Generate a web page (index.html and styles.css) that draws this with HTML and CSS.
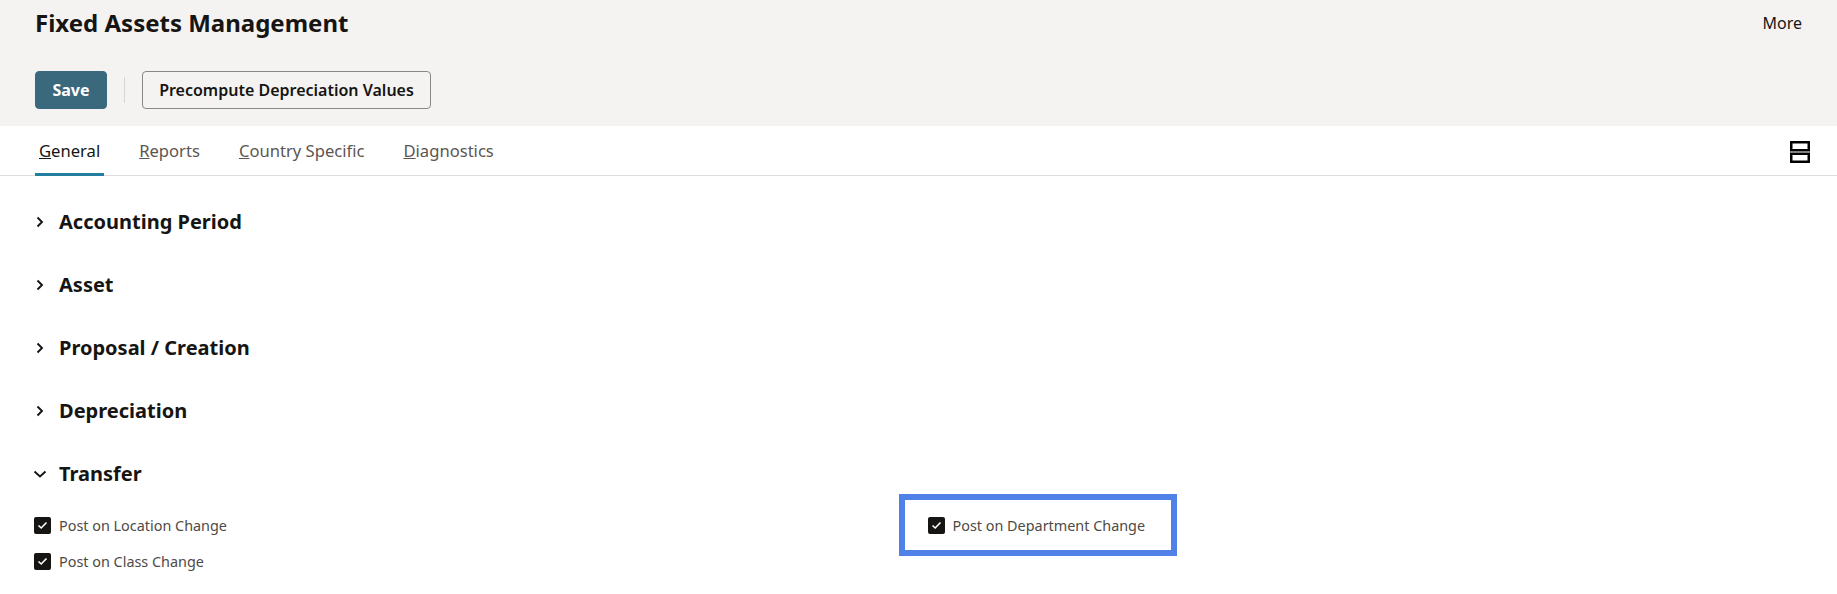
FILE: index.html
```html
<!DOCTYPE html>
<html>
<head>
<meta charset="utf-8">
<link rel="stylesheet" href="styles.css">
</head>
<body>
<header class="page-header">
  <div class="title-row">
    <h1 class="title">Fixed Assets Management</h1>
    <span class="more">More</span>
  </div>
  <div class="toolbar">
    <button class="btn btn-primary">Save</button>
    <span class="tb-sep"></span>
    <button class="btn btn-outline">Precompute Depreciation Values</button>
  </div>
</header>
<nav class="tabs">
  <div class="tab-list">
    <span class="tab active"><u>G</u>eneral</span>
    <span class="tab"><u>R</u>eports</span>
    <span class="tab"><u>C</u>ountry Specific</span>
    <span class="tab"><u>D</u>iagnostics</span>
  </div>
  <span class="layout-icon">
    <svg width="20" height="22" viewBox="0 0 20 22"><rect x="1.25" y="1.25" width="17.5" height="8" fill="none" stroke="#000" stroke-width="2.5"/><rect x="1.25" y="12.75" width="17.5" height="8" fill="none" stroke="#000" stroke-width="2.5"/></svg>
  </span>
</nav>
<main class="content">
  <section class="section">
    <div class="sec-head"><span class="chev"><svg width="10" height="12" viewBox="0 0 10 12"><path d="M2.5 1.5 L7 6 L2.5 10.5" fill="none" stroke="#161513" stroke-width="1.9"/></svg></span><h2>Accounting Period</h2></div>
  </section>
  <section class="section">
    <div class="sec-head"><span class="chev"><svg width="10" height="12" viewBox="0 0 10 12"><path d="M2.5 1.5 L7 6 L2.5 10.5" fill="none" stroke="#161513" stroke-width="1.9"/></svg></span><h2>Asset</h2></div>
  </section>
  <section class="section">
    <div class="sec-head"><span class="chev"><svg width="10" height="12" viewBox="0 0 10 12"><path d="M2.5 1.5 L7 6 L2.5 10.5" fill="none" stroke="#161513" stroke-width="1.9"/></svg></span><h2>Proposal / Creation</h2></div>
  </section>
  <section class="section">
    <div class="sec-head"><span class="chev"><svg width="10" height="12" viewBox="0 0 10 12"><path d="M2.5 1.5 L7 6 L2.5 10.5" fill="none" stroke="#161513" stroke-width="1.9"/></svg></span><h2>Depreciation</h2></div>
  </section>
  <section class="section open">
    <div class="sec-head"><span class="chev"><svg width="14" height="10" viewBox="0 0 14 10"><path d="M1.5 2.5 L7 7.5 L12.5 2.5" fill="none" stroke="#161513" stroke-width="1.9"/></svg></span><h2>Transfer</h2></div>
    <div class="fields">
      <div class="col">
        <label class="field"><span class="cb"><svg width="11" height="9" viewBox="0 0 11 9"><path d="M1.5 4.5 L4.2 7 L9.5 1.5" fill="none" stroke="#fff" stroke-width="1.6"/></svg></span>Post on Location Change</label>
        <label class="field"><span class="cb"><svg width="11" height="9" viewBox="0 0 11 9"><path d="M1.5 4.5 L4.2 7 L9.5 1.5" fill="none" stroke="#fff" stroke-width="1.6"/></svg></span>Post on Class Change</label>
      </div>
      <div class="col">
        <label class="field highlighted"><span class="cb"><svg width="11" height="9" viewBox="0 0 11 9"><path d="M1.5 4.5 L4.2 7 L9.5 1.5" fill="none" stroke="#fff" stroke-width="1.6"/></svg></span>Post on Department Change</label>
      </div>
    </div>
  </section>
</main>
</body>
</html>
```
FILE: styles.css
```css
* { box-sizing: border-box; }
html, body { margin: 0; padding: 0; }
body {
  font-family: "Noto Sans", sans-serif;
  color: #161513;
  background: #fff;
  width: 1837px;
  height: 594px;
  overflow: hidden;
}
.page-header {
  background: #f4f3f1;
  padding: 8px 35px 17px 35px;
}
.title-row {
  display: flex;
  justify-content: space-between;
  align-items: center;
  height: 30px;
}
.title {
  margin: 0;
  font-size: 24px;
  font-weight: 700;
  line-height: 30px;
}
.more {
  font-size: 16px;
  color: #161513;
}
.toolbar {
  display: flex;
  align-items: center;
  margin-top: 33px;
  height: 38px;
}
.btn {
  font-family: inherit;
  font-size: 16px;
  height: 38px;
  border-radius: 4px;
  padding: 0;
  cursor: pointer;
}
.btn-primary {
  background: #3a687c;
  color: #fff;
  border: 1px solid #3a687c;
  font-weight: 700;
  width: 72px;
}
.tb-sep {
  width: 1px;
  height: 26px;
  background: #d9d6d2;
  margin: 0 17px 0 17px;
}
.btn-outline {
  background: #f4f3f1;
  color: #161513;
  border: 1px solid #8b8783;
  font-weight: 600;
  width: 289px;
}
.tabs {
  display: flex;
  justify-content: space-between;
  align-items: center;
  height: 50px;
  padding: 0 27px 0 35px;
  border-bottom: 1px solid #e0dedb;
}
.tab-list {
  display: flex;
  height: 49px;
  gap: 31px;
  align-self: flex-start;
}
.tab {
  display: flex;
  align-items: center;
  padding: 1px 4px 0;
  font-size: 16.6px;
  color: #5b5651;
  border-bottom: 3px solid transparent;
  height: 50px;
}
.tab.active {
  color: #161513;
  border-bottom-color: #227e9e;
}
.layout-icon {
  display: flex;
  width: 20px;
  height: 22px;
  margin-top: 2px;
}
.content {
  padding: 14px 30px 0;
}
.section .sec-head {
  display: flex;
  align-items: center;
  height: 63px;
}
.chev {
  width: 20px;
  display: flex;
  justify-content: center;
  align-items: center;
  margin-right: 9px;
}
.sec-head h2 {
  margin: 0;
  font-size: 20px;
  font-weight: 700;
  color: #161513;
}
.fields {
  display: grid;
  grid-template-columns: 1fr 1fr;
  column-gap: 10px;
  margin-top: 2px;
}
.field {
  display: flex;
  align-items: center;
  height: 36px;
  padding-left: 4px;
  font-size: 14.4px;
  color: #4f4a45;
}
.cb {
  width: 17px;
  height: 17px;
  background: #161513;
  border-radius: 2px;
  display: flex;
  align-items: center;
  justify-content: center;
  margin-right: 8px;
}
.highlighted {
  position: relative;
  width: fit-content;
}
.highlighted::after {
  content: "";
  position: absolute;
  top: -13px;
  bottom: -13px;
  left: -25px;
  right: -32px;
  border: 6px solid #4f81e8;
}
```
